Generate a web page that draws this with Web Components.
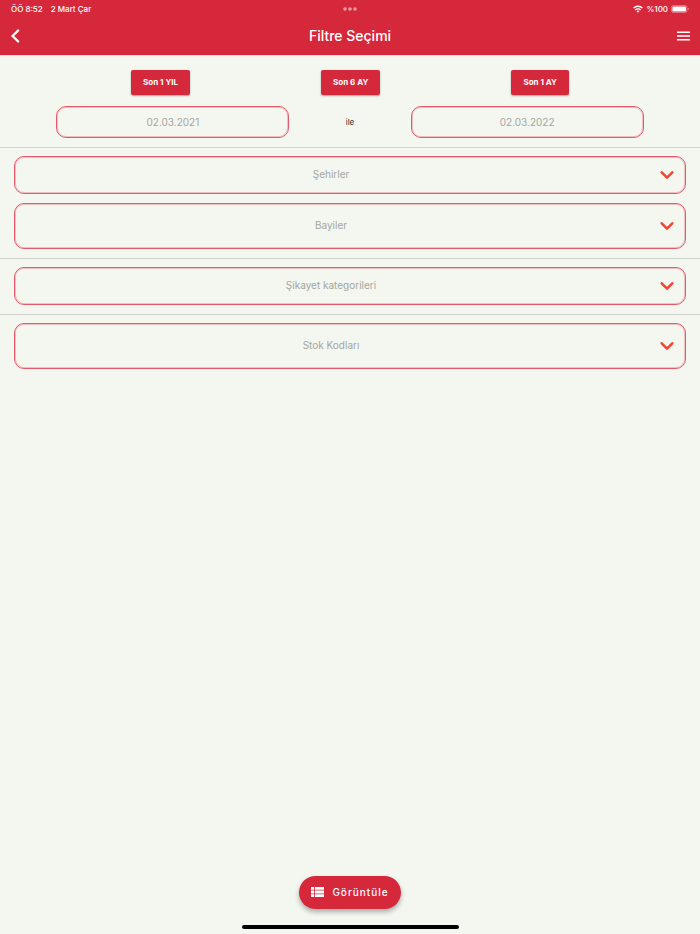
<!DOCTYPE html>
<html lang="tr">
<head>
<meta charset="utf-8">
<meta name="viewport" content="width=device-width, initial-scale=1">
<title>Filtre Seçimi</title>
<style>
  body {
    margin: 0;
    font-family: Inter, "Noto Sans", sans-serif;
    font-size: 10px;
    --red: #d6283b;
    --outline: #e4596c;
    --outline-soft: rgba(228, 89, 108, 0.35);
    --paper: #f4f7f0;
    --hint: #a3a5a1;
    --line: #d0d3ce;
    background: var(--paper);
  }
</style>
</head>
<body>
<filter-page>
  <status-bar slot="top" time="ÖÖ 8:52" date="2 Mart Çar" battery="%100"></status-bar>
  <app-bar slot="top">Filtre Seçimi</app-bar>

  <filter-section>
    <date-range from="02.03.2021" to="02.03.2022">
      <preset-button slot="preset">Son 1 YIL</preset-button>
      <preset-button slot="preset">Son 6 AY</preset-button>
      <preset-button slot="preset">Son 1 AY</preset-button>
    </date-range>
  </filter-section>
  <filter-section>
    <select-field label="Şehirler"></select-field>
    <select-field label="Bayiler" tall></select-field>
  </filter-section>
  <filter-section>
    <select-field label="Şikayet kategorileri"></select-field>
  </filter-section>
  <filter-section>
    <select-field label="Stok Kodları" tall></select-field>
  </filter-section>

  <view-button slot="bottom">Görüntüle</view-button>
</filter-page>

<script>
  class FilterPage extends HTMLElement {
    constructor() {
      super();
      this.attachShadow({ mode: 'open' }).innerHTML = `
        <style>
          :host {
            display: flex;
            flex-direction: column;
            min-height: 100vh;
          }
          header {
            background: var(--red);
            color: #fff;
            box-shadow: 0 1px 1px rgba(0, 0, 0, 0.08);
          }
          main {
            flex: 1;
          }
          footer {
            display: flex;
            flex-direction: column;
            align-items: center;
            gap: 16px;
            padding-bottom: 5px;
          }
          .home {
            width: 31%;
            height: 4px;
            border-radius: 2px;
            background: #000;
          }
        </style>
        <header><slot name="top"></slot></header>
        <main><slot></slot></main>
        <footer>
          <slot name="bottom"></slot>
          <div class="home"></div>
        </footer>
      `;
    }
  }

  class StatusBar extends HTMLElement {
    constructor() {
      super();
      this.attachShadow({ mode: 'open' }).innerHTML = `
        <style>
          :host {
            display: grid;
            grid-template-columns: 1fr auto 1fr;
            align-items: center;
            height: 17px;
            padding: 0 11px;
            font-size: 8px;
            line-height: 10px;
            font-weight: 500;
          }
          .left, .right {
            display: flex;
            align-items: center;
          }
          .left {
            gap: 8px;
          }
          .right {
            justify-content: flex-end;
            gap: 3px;
          }
          svg {
            display: block;
          }
        </style>
        <div class="left"><span class="time"></span><span class="date"></span></div>
        <svg width="14" height="4" viewBox="0 0 14 4" fill="#ef9aa4">
          <circle cx="2" cy="2" r="1.8"/><circle cx="7" cy="2" r="1.8"/><circle cx="12" cy="2" r="1.8"/>
        </svg>
        <div class="right">
          <svg width="10" height="8" viewBox="0 0 10 8" fill="none" stroke="#fff" stroke-width="1.4">
            <path d="M.6 3.1a6.2 6.2 0 0 1 8.8 0M2.3 5a3.8 3.8 0 0 1 5.4 0"/>
            <path d="M5 7.7 3.6 6.3a2 2 0 0 1 2.8 0z" fill="#fff" stroke="none"/>
          </svg>
          <span class="battery"></span>
          <svg width="18" height="8" viewBox="0 0 18 8">
            <rect x=".4" y=".4" width="15.6" height="7.2" rx="2.2" fill="none" stroke="#ec8f9a" stroke-width=".8"/>
            <rect x="1.4" y="1.4" width="13.6" height="5.2" rx="1.2" fill="#fff"/>
            <path d="M16.8 2.7v2.6q1-.4 1-1.3t-1-1.3z" fill="#ec8f9a"/>
          </svg>
        </div>
      `;
    }

    connectedCallback() {
      for (const name of ['time', 'date', 'battery']) {
        this.shadowRoot.querySelector('.' + name).textContent = this.getAttribute(name) || '';
      }
    }
  }

  class AppBar extends HTMLElement {
    constructor() {
      super();
      this.attachShadow({ mode: 'open' }).innerHTML = `
        <style>
          :host {
            display: grid;
            grid-template-columns: 1fr auto 1fr;
            align-items: center;
            height: 38px;
            padding: 0 10px;
          }
          h1 {
            margin: 0;
            font-size: 14px;
            font-weight: 500;
            line-height: 18px;
          }
          button {
            padding: 0;
            border: 0;
            background: none;
            color: inherit;
            cursor: pointer;
          }
          button:last-child {
            justify-self: end;
          }
          button:first-of-type {
            justify-self: start;
          }
          svg {
            display: block;
          }
        </style>
        <button type="button" aria-label="Geri">
          <svg width="10" height="14" viewBox="0 0 10 14" fill="none" stroke="currentColor" stroke-width="2.2">
            <path d="M8.8.9 2.6 7l6.2 6.1"/>
          </svg>
        </button>
        <h1><slot></slot></h1>
        <button type="button" aria-label="Menü">
          <svg width="13" height="10" viewBox="0 0 13 10" fill="currentColor">
            <path d="M0 .6h13v1.5H0zM0 4.3h13v1.5H0zM0 8h13v1.5H0z"/>
          </svg>
        </button>
      `;
    }
  }

  class FilterSection extends HTMLElement {
    constructor() {
      super();
      this.attachShadow({ mode: 'open' }).innerHTML = `
        <style>
          :host {
            display: flex;
            flex-direction: column;
            gap: 9px;
            padding: 8px 14px 9px;
            border-bottom: 1px solid var(--line);
          }
          :host(:first-of-type) {
            padding: 15px 0 9px;
          }
          :host(:last-of-type) {
            border-bottom: 0;
          }
        </style>
        <slot></slot>
      `;
    }
  }

  class PresetButton extends HTMLElement {
    constructor() {
      super();
      this.attachShadow({ mode: 'open' }).innerHTML = `
        <style>
          :host {
            display: block;
          }
          button {
            display: block;
            height: 25px;
            padding: 0 12px 1px;
            border: 0;
            border-radius: 2px;
            background: var(--red);
            color: #fff;
            font: 700 8px/12px Inter, "Noto Sans", sans-serif;
            box-shadow: 0 1px 2px rgba(0, 0, 0, 0.35);
            cursor: pointer;
          }
        </style>
        <button type="button"><slot></slot></button>
      `;
    }
  }

  class DateRange extends HTMLElement {
    constructor() {
      super();
      this.attachShadow({ mode: 'open' }).innerHTML = `
        <style>
          :host {
            display: flex;
            flex-direction: column;
            gap: 11px;
          }
          .row {
            display: flex;
            justify-content: space-evenly;
            align-items: center;
          }
          input {
            box-sizing: border-box;
            width: 33.3%;
            height: 32px;
            padding: 0 0 1px;
            border: 1px solid var(--outline);
            border-radius: 10px;
            box-shadow: inset 0 0 0 1px var(--outline-soft);
            background: none;
            color: var(--hint);
            font: 400 10px/14px Inter, "Noto Sans", sans-serif;
            text-align: center;
          }
          .between {
            color: #333;
            font-size: 8px;
          }
        </style>
        <div class="row"><slot name="preset"></slot></div>
        <div class="row">
          <input class="from" type="text" aria-label="Başlangıç tarihi">
          <span class="between">ile</span>
          <input class="to" type="text" aria-label="Bitiş tarihi">
        </div>
      `;
    }

    connectedCallback() {
      this.shadowRoot.querySelector('.from').value = this.getAttribute('from') || '';
      this.shadowRoot.querySelector('.to').value = this.getAttribute('to') || '';
    }
  }

  class SelectField extends HTMLElement {
    constructor() {
      super();
      this.attachShadow({ mode: 'open' }).innerHTML = `
        <style>
          :host {
            display: grid;
            grid-template-columns: 1fr 38px;
            align-items: center;
            height: 38px;
          }
          :host([tall]) {
            height: 46px;
          }
          select {
            grid-area: 1 / 1 / 2 / 3;
            box-sizing: border-box;
            width: 100%;
            height: 100%;
            padding: 0 38px 2px 0;
            border: 1px solid var(--outline);
            border-radius: 10px;
            box-shadow: inset 0 0 0 1px var(--outline-soft);
            background: none;
            appearance: none;
            color: var(--hint);
            font: 400 10px/14px Inter, "Noto Sans", sans-serif;
            text-align: center;
            text-align-last: center;
          }
          svg {
            grid-area: 1 / 2;
            justify-self: center;
            pointer-events: none;
          }
        </style>
        <select><option></option></select>
        <svg width="14" height="8" viewBox="0 0 14 8" fill="none" stroke="#f4432f" stroke-width="2.5" stroke-linecap="round" stroke-linejoin="round">
          <path d="M1.7 1.3 7 6.6l5.3-5.3"/>
        </svg>
      `;
    }

    connectedCallback() {
      const label = this.getAttribute('label') || '';
      this.shadowRoot.querySelector('select').setAttribute('aria-label', label);
      this.shadowRoot.querySelector('option').textContent = label;
    }
  }

  class ViewButton extends HTMLElement {
    constructor() {
      super();
      this.attachShadow({ mode: 'open' }).innerHTML = `
        <style>
          :host {
            display: block;
          }
          button {
            display: flex;
            align-items: center;
            gap: 8px;
            height: 33px;
            padding: 0 12px 1px;
            border: 0;
            border-radius: 17px;
            background: var(--red);
            color: #fff;
            font: 500 10px/14px Inter, "Noto Sans", sans-serif;
            letter-spacing: 1px;
            box-shadow: 0 3px 5px rgba(0, 0, 0, 0.3);
            cursor: pointer;
          }
        </style>
        <button type="button">
          <svg width="13" height="10" viewBox="0 0 13 10" fill="currentColor">
            <path d="M0 0h3v2.8H0zM0 3.6h3v2.8H0zM0 7.2h3V10H0zM3.8 0H13v2.8H3.8zM3.8 3.6H13v2.8H3.8zM3.8 7.2H13V10H3.8z"/>
          </svg>
          <slot></slot>
        </button>
      `;
    }
  }

  customElements.define('filter-page', FilterPage);
  customElements.define('status-bar', StatusBar);
  customElements.define('app-bar', AppBar);
  customElements.define('filter-section', FilterSection);
  customElements.define('preset-button', PresetButton);
  customElements.define('date-range', DateRange);
  customElements.define('select-field', SelectField);
  customElements.define('view-button', ViewButton);
</script>
</body>
</html>
